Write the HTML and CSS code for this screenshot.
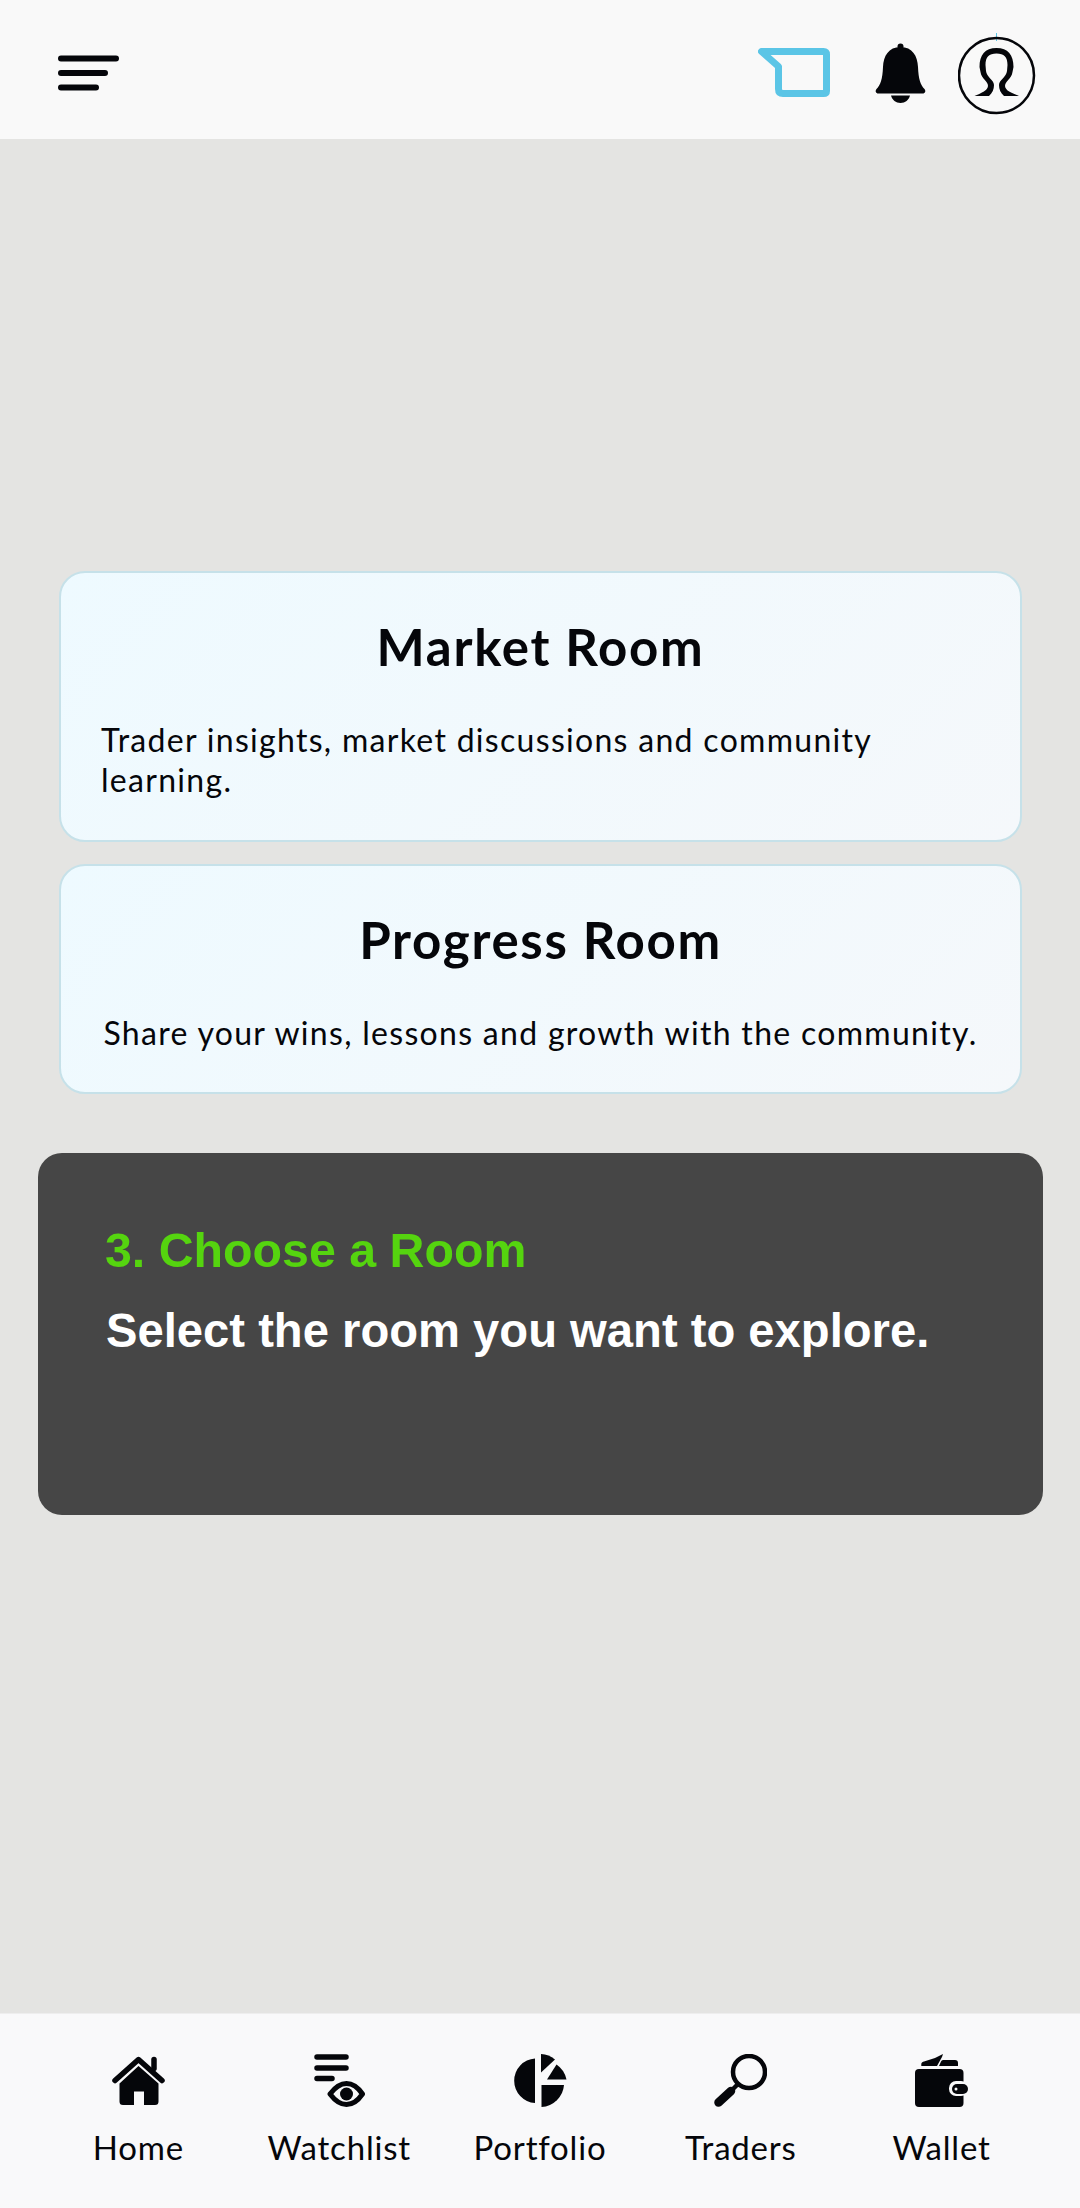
FILE: index.html
```html
<!DOCTYPE html>
<html lang="en">
<head>
    <meta charset="UTF-8">
    <meta name="viewport" content="width=device-width, initial-scale=1.0">
    <title>Choose a Room</title>
    <link rel="stylesheet" href="styles.css">
</head>
<body>
    <div class="app">
        <header class="topbar">
            <svg class="menu-icon" viewBox="0 0 61 36" width="61" height="36">
                <path d="M3 3.500H58M3 18H47M3 32.500H38" fill="none" stroke="#05060a" stroke-width="6" stroke-linecap="round"/>
            </svg>
            <div class="topbar-actions">
                <svg class="chat-icon" viewBox="0 0 72 52" width="72" height="52">
                    <path d="M3.500 3.500H65.500Q68.500 3.500 68.500 6.500V43Q68.500 45.500 65.500 45.500H25Q20.500 45.500 20.500 41V18.500Z" fill="none" stroke="#5bc5e6" stroke-width="7" stroke-linejoin="round"/>
                </svg>
                <svg class="bell-icon" viewBox="0 0 51 60" width="51" height="60">
                    <circle cx="25.500" cy="3.500" r="3" fill="#05060a"/>
                    <path d="M25.500 4C13.500 4 8.500 13 8 24C7.500 36 5.500 42 1.500 46C0 48 .5 50.500 3.500 50.500H47.500C50.500 50.500 51 48 49.500 46C45.500 42 43.500 36 43 24C42.500 13 37.500 4 25.500 4Z" fill="#05060a"/>
                    <path d="M16 52.500H35C34 57 30 60 25.500 60C21 60 17 57 16 52.500Z" fill="#05060a"/>
                </svg>
                <svg class="avatar-icon" viewBox="0 0 78 82" width="78" height="82">
                    <path d="M38.500 0V8" stroke="#5bc5e6" stroke-width="1"/>
                    <circle cx="38.500" cy="42.500" r="37.500" fill="none" stroke="#05060a" stroke-width="2.500"/>
                    <path d="M16.500 63C23 60 29.500 58 30 53C30 48 23.500 46 22.500 39L21.500 34C21.500 22 27 15 38.500 15C50 15 55.500 22 55.500 34L54.500 39C53.500 46 47 48 47 53C47.500 58 54 60 61 63L46 63C42.500 60 41 56 41 52C41 47 48.500 44 49 38L49.500 32C49.500 24 46 20.500 38.500 20.500C31 20.500 27.500 24 27.500 32L28 38C28.500 44 36 47 36 52C36 56 34.500 60 31 63Z" fill="#05060a"/>
                </svg>
            </div>
        </header>

        <main class="content">
            <section class="room-card">
                <h2 class="room-title">Market Room</h2>
                <p class="room-text">Trader insights, market discussions and community learning.</p>
            </section>
            <section class="room-card room-card-short">
                <h2 class="room-title">Progress Room</h2>
                <p class="room-text">Share your wins, lessons and growth with the community.</p>
            </section>
            <section class="tip">
                <h3 class="tip-title">3. Choose a Room</h3>
                <p class="tip-text">Select the room you want to explore.</p>
            </section>
        </main>

        <nav class="tabbar">
            <a class="tab">
                <svg viewBox="0 0 53 50" width="53" height="50">
                    <path d="M3 25L26.500 4L50 25" fill="none" stroke="#05060a" stroke-width="5.500" stroke-linecap="round" stroke-linejoin="round"/>
                    <path d="M42 4V13" stroke="#05060a" stroke-width="5.500" stroke-linecap="round"/>
                    <path d="M26.500 10.500L46.500 28V46Q46.500 49.500 43 49.500H32V36H22V49.500H11Q7.500 49.500 7.500 46V28Z" fill="#05060a"/>
                </svg>
                <span>Home</span>
            </a>
            <a class="tab">
                <svg viewBox="0 0 51 53" width="51" height="53">
                    <path d="M3 3H32M3 14H32M3 24.500H18" stroke="#05060a" stroke-width="5.500" stroke-linecap="round"/>
                    <path d="M16 40C22 32 27 29.500 32.500 29.500C38 29.500 43 32 48.500 40C43 48 38 50.500 32.500 50.500C27 50.500 22 48 16 40Z" fill="none" stroke="#05060a" stroke-width="5" stroke-linejoin="round"/>
                    <circle cx="32.500" cy="40" r="6.500" fill="#05060a"/>
                </svg>
                <span>Watchlist</span>
            </a>
            <a class="tab">
                <svg viewBox="0 0 54 53" width="54" height="53">
                    <path d="M22 4.500A22.300 22.300 0 0 0 22 49Z" fill="#05060a"/>
                    <path d="M28.500 31H51A24 24 0 0 1 28.500 53Z" fill="#05060a"/>
                    <path d="M28 0A24 24 0 0 1 42 5.500L28 18.500Z" fill="#05060a"/>
                    <path d="M43.500 10.500A24 24 0 0 1 53.500 25.500H34Z" fill="#05060a"/>
                </svg>
                <span>Portfolio</span>
            </a>
            <a class="tab">
                <svg viewBox="0 0 53 53" width="53" height="53">
                    <circle cx="35" cy="18" r="16" fill="none" stroke="#05060a" stroke-width="4.500"/>
                    <path d="M18 36L24 30" stroke="#05060a" stroke-width="4.500"/>
                    <path d="M4.500 48.500L17 37" stroke="#05060a" stroke-width="8.500" stroke-linecap="round"/>
                </svg>
                <span>Traders</span>
            </a>
            <a class="tab">
                <svg viewBox="0 0 53 53" width="53" height="53">
                    <rect x="0" y="15" width="48.500" height="38" rx="4" fill="#05060a"/>
                    <rect x="34" y="27" width="19" height="15" rx="7" fill="#f9f9fa"/>
                    <rect x="37" y="30" width="16" height="10" rx="5" fill="#05060a"/>
                    <circle cx="41" cy="35" r="1.500" fill="#f9f9fa"/>
                    <path d="M6.300 12V10C6.300 8.500 8 7.500 9 7.500L20 4L28 0L27 3L22 12Z" fill="#05060a"/>
                    <path d="M24 12L26 7.500Q26.500 6 28 6H40Q43 6 43 9V12Z" fill="#05060a"/>
                </svg>
                <span>Wallet</span>
            </a>
        </nav>
    </div>
</body>
</html>
```

FILE: styles.css
```css
body {
    margin: 0;
    background: #e4e4e2;
    font-family: "Lato", "Noto Sans", sans-serif;
    color: #05060a;
}

.app {
    display: flex;
    flex-direction: column;
    height: 2208px;
    overflow: hidden;
}

/* Top bar */
.topbar {
    display: flex;
    align-items: center;
    justify-content: space-between;
    height: 139px;
    padding: 0 44px 0 58px;
    background: #f9f9f9;
}

.menu-icon {
    margin-top: 6px;
}

.topbar-actions {
    display: flex;
    align-items: flex-start;
    height: 82px;
    margin-top: 9px;
}

.chat-icon {
    margin: 15px 0 0 0;
}

.bell-icon {
    margin: 10px 0 0 45px;
}

.avatar-icon {
    margin-left: 32px;
}

/* Room cards */
.content {
    flex: 1;
    display: flex;
    flex-direction: column;
    padding: 432px 37px 0 38px;
}

.room-card {
    box-sizing: border-box;
    height: 271px;
    margin: 0 21px 22px;
    padding: 46px 40px 0;
    border: 2px solid #c6e1e9;
    border-radius: 26px;
    background: linear-gradient(135deg, #eefaff, #f5f8fb);
}

.room-card-short {
    height: 230px;
    margin-bottom: 0;
    text-align: center;
}

.room-title {
    margin: 0 0 45px;
    font-size: 51px;
    font-weight: 700;
    letter-spacing: 1.700px;
    line-height: 56px;
    text-align: center;
}

.room-text {
    margin: 0;
    font-size: 32px;
    letter-spacing: 1.300px;
    line-height: 40px;
}

/* Walkthrough tip */
.tip {
    box-sizing: border-box;
    height: 362px;
    margin-top: 59px;
    padding: 70px 67px 0;
    border-radius: 24px;
    background: #464646;
}

.tip-title {
    margin: 0 0 27px;
    font-family: "Liberation Sans", Arial, sans-serif;
    font-size: 48.300px;
    font-weight: 700;
    line-height: 54px;
    color: #55d40f;
}

.tip-text {
    margin: 0 0 0 1px;
    font-family: "Liberation Sans", Arial, sans-serif;
    font-size: 47.200px;
    font-weight: 700;
    line-height: 54px;
    color: #fff;
}

/* Bottom tabs */
.tabbar {
    display: grid;
    grid-template-columns: repeat(5, 200.800px);
    height: 195px;
    padding: 0 38px;
    border-top: 1px solid #eeeeee;
    box-sizing: border-box;
    background: #f9f9fa;
}

.tab {
    display: flex;
    flex-direction: column;
    align-items: center;
    padding-top: 40px;
}

.tab svg {
    height: 53px;
}

.tab span {
    margin-top: 20px;
    font-size: 33px;
    letter-spacing: .800px;
    line-height: 40px;
}
```
